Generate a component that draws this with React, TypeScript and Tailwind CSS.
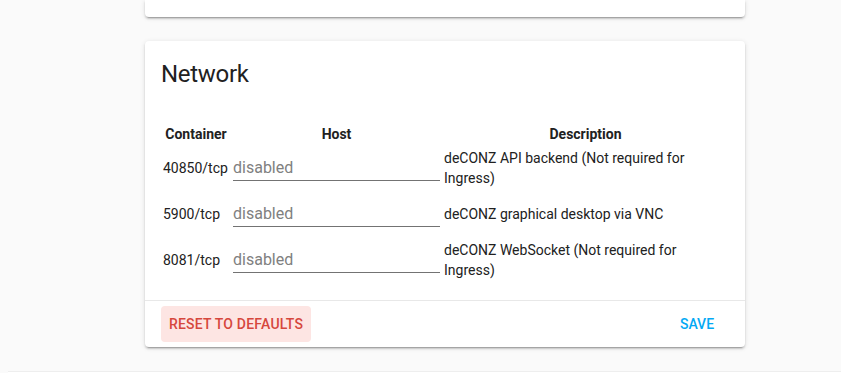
const ports = [
  { container: "40850/tcp", description: "deCONZ API backend (Not required for Ingress)" },
  { container: "5900/tcp", description: "deCONZ graphical desktop via VNC" },
  { container: "8081/tcp", description: "deCONZ WebSocket (Not required for Ingress)" },
];

const cardShadow =
  "shadow-[0_2px_2px_0_rgba(0,0,0,0.14),0_1px_5px_0_rgba(0,0,0,0.12),0_3px_1px_-2px_rgba(0,0,0,0.2)]";

export default function App() {
  return (
    <div className="h-[373px] w-[841px] overflow-hidden bg-[#fafafa] font-['Roboto',sans-serif] text-[#212121]">
      <div className="ml-[145px] flex w-[600px] flex-col">
        {/* previous card (cut off at the top) */}
        <div className={`h-[17px] rounded-b bg-white ${cardShadow}`} />

        <div className={`mt-6 rounded bg-white ${cardShadow}`}>
          <h1 className="px-4 pt-[17px] pb-[32px] text-2xl leading-8 font-normal tracking-[-0.012em]">
            Network
          </h1>

          <div className="px-4 pb-[17px]">
            <div className="grid grid-cols-[70px_211px_1fr] text-sm">
              <div className="flex h-[23px] items-center justify-center px-0.5 font-bold">Container</div>
              <div className="flex h-[23px] items-center justify-center px-0.5 font-bold">Host</div>
              <div className="flex h-[23px] items-center justify-center px-0.5 font-bold">Description</div>

              {ports.map((p) => (
                <div key={p.container} className="contents">
                  <div className="flex h-[46px] items-center px-0.5">{p.container}</div>
                  <div className="flex h-[46px] items-center px-0.5">
                    <div className="w-full border-b border-[#737373] text-base leading-6 text-[#808080]">
                      disabled
                    </div>
                  </div>
                  <div className="flex h-[46px] items-center px-0.5 leading-5">{p.description}</div>
                </div>
              ))}
            </div>
          </div>

          <div className="flex items-center justify-between border-t border-[#e8e8e8] px-4 py-[5px]">
            <button className="h-9 rounded bg-[#fde5e3] px-2 text-sm font-medium tracking-[0.2px] text-[#d6473d] uppercase">
              Reset to defaults
            </button>
            <button className="h-9 min-w-16 rounded px-2 text-sm font-medium text-[#03a9f4] uppercase">
              Save
            </button>
          </div>
        </div>
      </div>

      {/* next section peeking in at the bottom */}
      <div className="mt-6 ml-2 h-8 border-t border-[#eeeeee] bg-white" />
    </div>
  );
}
